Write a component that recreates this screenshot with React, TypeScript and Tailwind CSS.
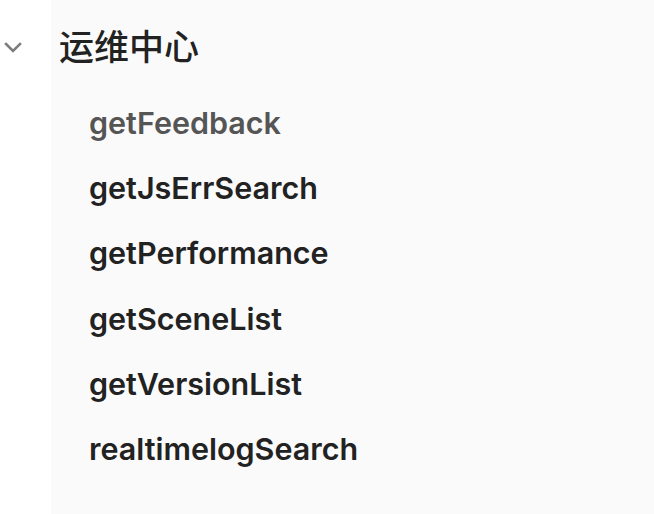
import React from "react";

const items = [
  { name: "getFeedback", muted: true },
  { name: "getJsErrSearch" },
  { name: "getPerformance" },
  { name: "getSceneList" },
  { name: "getVersionList" },
  { name: "realtimelogSearch" },
];

export default function App() {
  return (
    <div
      className="flex h-[514px] w-[654px] overflow-hidden bg-white"
      style={{ fontFamily: '"Inter", "Noto Sans CJK SC", sans-serif' }}
    >
      <div className="flex w-[51px] shrink-0 flex-col">
        <div className="flex h-[90px] items-center pt-[4px] pl-[3px]">
          <svg width="20" height="14" viewBox="0 0 20 14" fill="none">
            <path d="M3 4l7 7 7-7" stroke="#7d7d7d" strokeWidth="2.6" strokeLinecap="square" />
          </svg>
        </div>
      </div>
      <div className="flex flex-1 flex-col bg-[#fafafa]">
        <div className="flex h-[90px] items-center pt-[4px] pl-[8px]">
          <span className="text-[35px] font-medium text-[#222222]">运维中心</span>
        </div>
        {items.map((it) => (
          <div key={it.name} className="flex h-[65.33px] items-center pl-[38px]">
            <span
              className={
                "text-[30.5px] font-semibold " +
                (it.muted ? "text-[#555555]" : "text-[#222222]")
              }
            >
              {it.name}
            </span>
          </div>
        ))}
      </div>
    </div>
  );
}
